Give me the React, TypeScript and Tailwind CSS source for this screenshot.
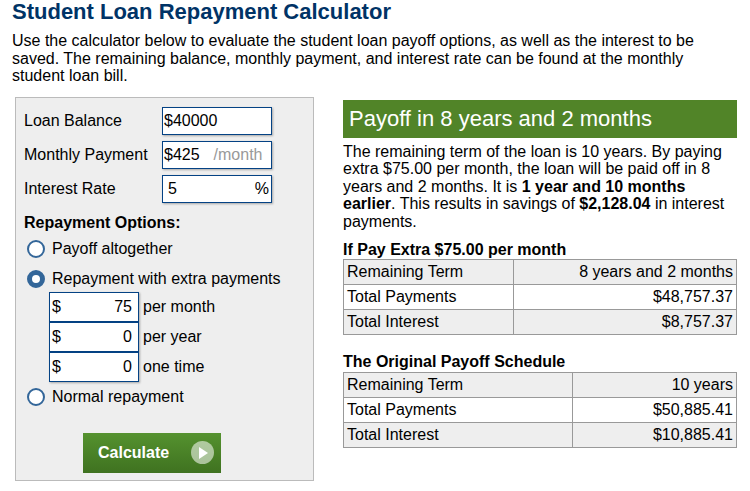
import React from "react";

const font = { fontFamily: '"Liberation Sans", Arial, sans-serif' };

function Radio({ checked, label }: { checked?: boolean; label: string }) {
  return (
    <div className="flex items-center h-[26px]">
      <span
        className={
          checked
            ? "ml-[3px] w-[18px] h-[18px] rounded-full border-[5px] border-[#336699] bg-white box-border"
            : "ml-[3px] w-[18px] h-[18px] rounded-full border-2 border-[#336699] bg-white box-border"
        }
      />
      <span className="ml-[7px] text-[16px] text-black">{label}</span>
    </div>
  );
}

function ExtraInput({ value, label }: { value: string; label: string }) {
  return (
    <div className="flex items-center h-[30px]">
      <div className="w-[90px] h-[30px] bg-white border border-[#044284] shadow-[1px_1px_2px_rgba(0,0,0,0.3)] flex items-center justify-between pl-[2px] pr-[6px] text-[16px] box-border">
        <span>$</span>
        <span>{value}</span>
      </div>
      <span className="ml-[4px] text-[16px]">{label}</span>
    </div>
  );
}

function Row({ label, children }: { label: string; children: React.ReactNode }) {
  return (
    <div className="flex items-center h-[28px]">
      <div className="w-[138px] text-[16px]">{label}</div>
      <div className="w-[110px] h-[28px] bg-white border border-[#044284] shadow-[1px_1px_2px_rgba(0,0,0,0.3)] box-border flex items-center text-[16px]">
        {children}
      </div>
    </div>
  );
}

function Table({ rows, split }: { rows: [string, string][]; split: number }) {
  return (
    <table className="w-[394px] border-collapse text-[16px]">
      <tbody>
        {rows.map((r, i) => (
          <tr key={i} className={i % 2 === 0 ? "bg-[#eeeeee] h-[25px]" : "bg-white h-[25px]"}>
            <td className="border border-[#999999] pl-[3px] py-0" style={{ width: split }}>
              {r[0]}
            </td>
            <td className="border border-[#999999] pr-[3px] py-0 text-right">{r[1]}</td>
          </tr>
        ))}
      </tbody>
    </table>
  );
}

export default function App() {
  return (
    <div className="pl-[12px] bg-white w-[750px] h-[491px] text-black" style={font}>
      <h1 className="text-[22px] font-bold leading-[24px] text-[#003366]">
        Student Loan Repayment Calculator
      </h1>
      <p className="mt-[8px] w-[726px] text-[16px] leading-[17.5px]">
        Use the calculator below to evaluate the student loan payoff options, as well as the interest to be
        saved. The remaining balance, monthly payment, and interest rate can be found at the monthly
        student loan bill.
      </p>
      <div className="flex items-start mt-[12px]">
        <div className="ml-[3px] w-[299px] h-[384px] bg-[#eeeeee] border border-[#bbbbbb] box-border pl-[8px] pt-[9px]">
          <div className="flex flex-col gap-[6px]">
            <Row label="Loan Balance">
              <span className="pl-[1px]">$40000</span>
            </Row>
            <Row label="Monthly Payment">
              <span className="pl-[1px]">$425</span>
              <span className="ml-[14px] text-[#999999]">/month</span>
            </Row>
            <Row label="Interest Rate">
              <span className="pl-[5px] flex-1">5</span>
              <span className="pr-[2px]">%</span>
            </Row>
          </div>
          <div className="mt-[10px] text-[16px] font-bold leading-[20px]">Repayment Options:</div>
          <div className="mt-[3px]">
            <Radio label="Payoff altogether" />
            <div className="mt-[4px]">
              <Radio checked label="Repayment with extra payments" />
            </div>
            <div className="ml-[25px]">
              <ExtraInput value="75" label="per month" />
              <ExtraInput value="0" label="per year" />
              <ExtraInput value="0" label="one time" />
            </div>
            <div className="mt-[2px]">
              <Radio label="Normal repayment" />
            </div>
          </div>
          <button className="mt-[23px] ml-[59px] w-[138px] h-[40px] bg-gradient-to-b from-[#55922f] to-[#3f7220] flex items-center pl-[15px] text-white text-[16px] font-bold">
            Calculate
            <span className="ml-[22px] w-[23px] h-[23px] rounded-full bg-[rgba(255,255,255,0.55)] flex items-center justify-center">
              <svg width="10" height="12" viewBox="0 0 10 12">
                <path d="M1 0 L10 6 L1 12 Z" fill="white" />
              </svg>
            </span>
          </button>
        </div>
        <div className="ml-[29px] mt-[3px] w-[394px]">
          <div className="h-[38px] bg-[#518428] text-white text-[22px] pl-[6px] flex items-center">
            Payoff in 8 years and 2 months
          </div>
          <p className="mt-[5px] text-[16px] leading-[17.5px]">
            The remaining term of the loan is 10 years. By paying extra $75.00 per month, the loan will be paid off in 8 years and 2 months. It is <b>1 year and 10 months earlier</b>. This results in savings of <b>$2,128.04</b> in interest payments.
          </p>
          <div className="mt-[11px] text-[16px] font-bold leading-[18px]">If Pay Extra $75.00 per month</div>
          <Table
            split={170}
            rows={[
              ["Remaining Term", "8 years and 2 months"],
              ["Total Payments", "$48,757.37"],
              ["Total Interest", "$8,757.37"],
            ]}
          />
          <div className="mt-[18px] text-[16px] font-bold leading-[18px]">The Original Payoff Schedule</div>
          <div className="mt-[1px]">
            <Table
              split={229}
              rows={[
                ["Remaining Term", "10 years"],
                ["Total Payments", "$50,885.41"],
                ["Total Interest", "$10,885.41"],
              ]}
            />
          </div>
        </div>
      </div>
    </div>
  );
}
